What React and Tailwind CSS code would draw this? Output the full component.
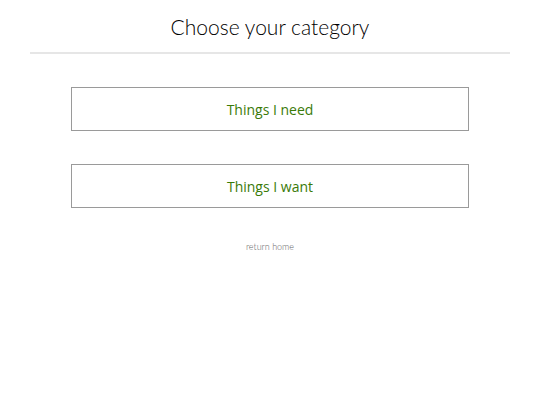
export default function App() {
  const categories = ["Things I need", "Things I want"];

  return (
    <div className="min-h-[405px] bg-white">
      <div className="mx-[30px] border-b-2 border-[#e6e6e6] pt-[12px] pb-[10px] text-center">
        <h1 className="text-[21px] leading-[30px] font-light text-black font-['Lato','DejaVu_Sans',sans-serif]">
          Choose your category
        </h1>
      </div>

      <div className="mx-[71px] mt-[33px] flex flex-col gap-[33px]">
        {categories.map((c) => (
          <button
            key={c}
            className="h-[44px] w-[398px] border border-[#9a9a9a] bg-white text-[14px] text-[#3a7a08] font-['Open_Sans','Liberation_Sans',sans-serif]"
          >
            {c}
          </button>
        ))}
      </div>

      <div className="mt-[24px] text-center">
        <a className="text-[9px] text-[#666] font-light font-['Lato','DejaVu_Sans',sans-serif]">
          return home
        </a>
      </div>
    </div>
  );
}
